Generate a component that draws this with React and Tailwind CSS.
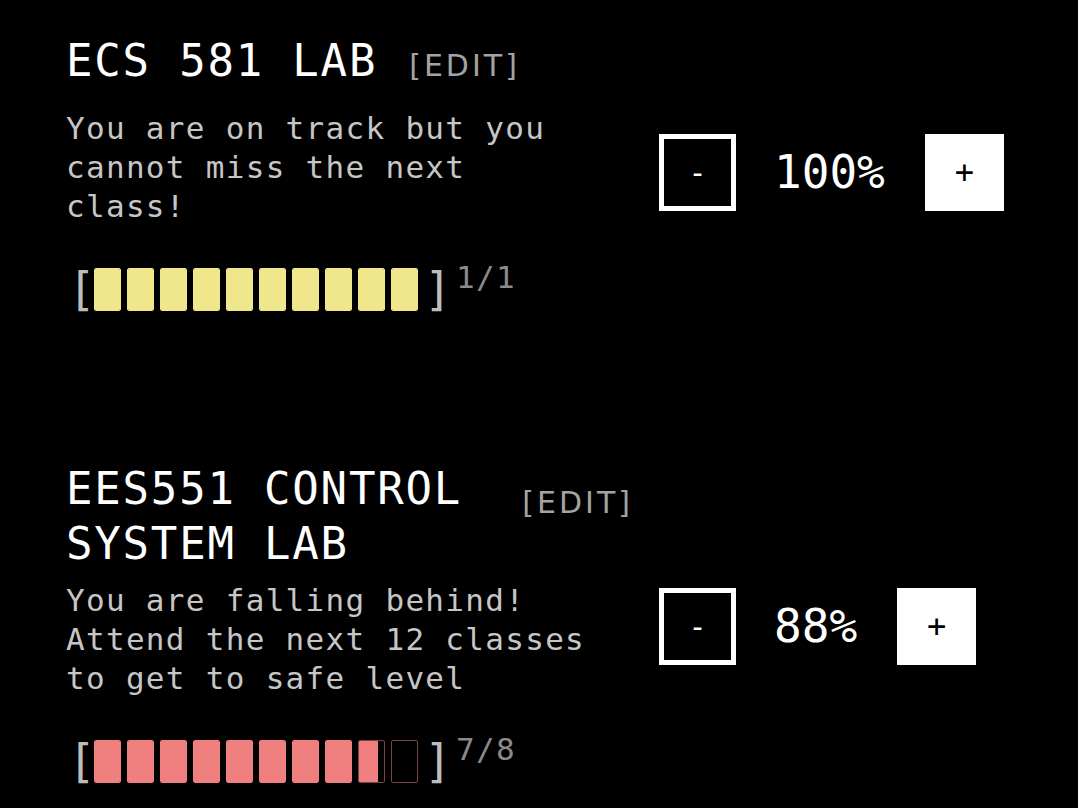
import React from 'react';

const courses = [
  {
    id: 1,
    title: 'ECS 581 LAB',
    status: 'You are on track but you cannot miss the next class!',
    percent: 100,
    attended: 1,
    total: 1,
    fill: '#f0e68c',
    dim: '#6e6838',
    editTop: 'mt-[15px]',
    bodyTop: 'mt-[21px]',
    controlsTop: 'mt-0',
  },
  {
    id: 2,
    title: 'EES551 CONTROL SYSTEM LAB',
    status: 'You are falling behind! Attend the next 12 classes to get to safe level',
    percent: 88,
    attended: 7,
    total: 8,
    fill: '#f08080',
    dim: '#7a4444',
    editTop: 'mt-[24px]',
    bodyTop: 'mt-[10px]',
    controlsTop: 'mt-[8px]',
  },
];

const mono = "font-['DejaVu_Sans_Mono',monospace]";

function ProgressBar({ attended, total, fill, dim }) {
  const filled = (attended / total) * 10;

  return (
    <div className="flex h-[43px] items-center">
      <span className={`${mono} ml-[2px] w-[26px] text-[46px] leading-[43px] text-[#bdbdbd]`}>[</span>
      <div className="flex gap-[6px]">
        {Array.from({ length: 10 }).map((_, i) => {
          const part = Math.max(0, Math.min(1, filled - i));
          return (
            <div
              key={i}
              className="h-[43px] w-[27px] overflow-hidden rounded-[2px] border"
              style={{ borderColor: part === 1 ? fill : dim }}
            >
              <div className="h-full" style={{ width: `${part * 100}%`, backgroundColor: fill }} />
            </div>
          );
        })}
      </div>
      <span className={`${mono} ml-[6px] w-[24px] text-[46px] leading-[43px] text-[#bdbdbd]`}>]</span>
      <span className={`${mono} -mt-[9px] ml-[8px] self-start text-[31px] leading-[36px] tracking-[1.3px] text-[#8a8a8a]`}>
        {attended}/{total}
      </span>
    </div>
  );
}

function CourseCard({ course }) {
  return (
    <div className="flex items-center gap-[26px]">
      <div className="w-[567px]">
        <div className="flex items-start gap-[32px]">
          <h2 className={`${mono} text-[44px] leading-[55px] tracking-[1.8px] text-white`}>
            {course.title}
          </h2>
          <span
            className={`shrink-0 font-['DejaVu_Sans',sans-serif] text-[30px] leading-[36px] tracking-[3px] text-[#a3a3a3] ${course.editTop}`}
          >
            [EDIT]
          </span>
        </div>
        <p
          className={`${mono} w-[530px] text-[31px] leading-[39px] tracking-[1.3px] text-[#c6c6c6] ${course.bodyTop}`}
        >
          {course.status}
        </p>
        <div className="mt-[42px]">
          <ProgressBar
            attended={course.attended}
            total={course.total}
            fill={course.fill}
            dim={course.dim}
          />
        </div>
      </div>

      <div className={`flex items-center ${course.controlsTop}`}>
        <button className={`${mono} flex h-[77px] w-[77px] items-center justify-center border-[5px] border-white bg-black text-[30px] text-white`}>
          -
        </button>
        <span className={`${mono} ml-[38px] text-[46px] leading-none text-white`}>
          {course.percent}%
        </span>
        <button className={`${mono} ml-[40px] flex h-[77px] w-[79px] items-center justify-center bg-white text-[32px] text-black`}>
          +
        </button>
      </div>
    </div>
  );
}

export default function App() {
  return (
    <div className="min-h-screen w-full bg-black pl-[66px] pt-[33px]">
      <div className="flex flex-col gap-[150px]">
        {courses.map((course) => (
          <CourseCard key={course.id} course={course} />
        ))}
      </div>
    </div>
  );
}
